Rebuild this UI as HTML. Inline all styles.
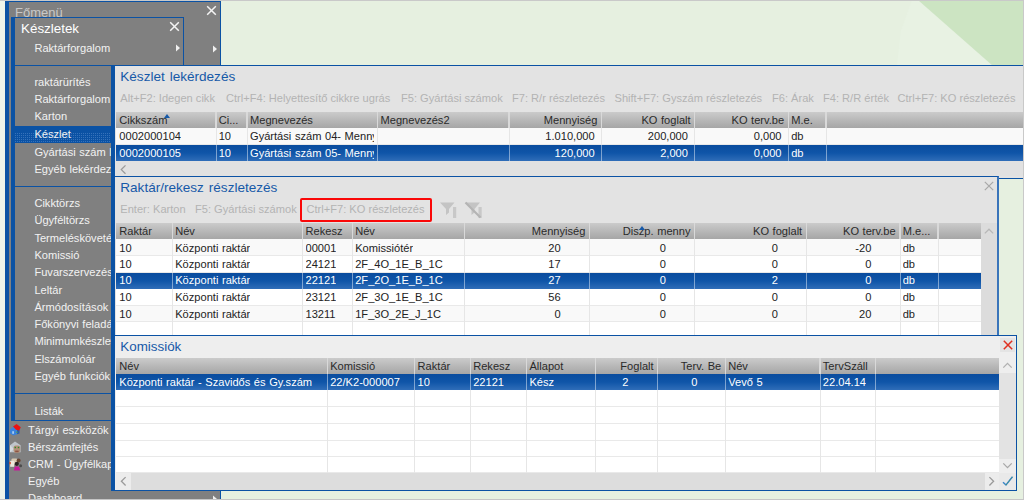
<!DOCTYPE html>
<html lang="hu"><head><meta charset="utf-8"><title>Készlet lekérdezés</title>
<style>
html,body{margin:0;padding:0;}
body{width:1024px;height:500px;overflow:hidden;position:relative;background:#e6f0e0;font-family:"Liberation Sans",Arial,sans-serif;}
#root{position:absolute;left:0;top:0;width:1024px;height:500px;overflow:hidden;}
#root div,.abs{position:absolute;}
.t{position:absolute;white-space:nowrap;line-height:1;word-spacing:.5px;}
</style></head><body><div id="root">
<svg class="abs" style="left:0;top:0" width="1024" height="500" viewBox="0 0 1024 500"><rect width="1024" height="500" fill="#e6f0e0"/><polygon points="912,0 918,0 993,66 897,66 901,31" fill="#e8f2e3"/><polygon points="918,0 1024,0 1024,66 993,66" fill="#cce4c2"/><polygon points="0,0 6,0 6,500 0,500" fill="#eef4ea"/></svg>
<div style="left:5px;top:1px;width:4px;height:499px;background:#0b52a4"></div>
<div style="left:9px;top:1px;width:212px;height:499px;background:#808080;border-top:1px solid #0b52a4;border-right:1px solid #0b52a4;box-sizing:border-box"></div>
<span class="t" style="left:15px;top:6px;font-size:13px;color:#c8c8c8;">Főmenü</span>
<svg class="abs" style="left:206.2px;top:5.2px" width="11" height="11" viewBox="0 0 11 11"><path d="M1.2 1.2 L9.8 9.8 M9.8 1.2 L1.2 9.8" stroke="#f4f4f4" stroke-width="1.5" fill="none"/></svg>
<svg class="abs" style="left:212px;top:45px" width="6" height="8" viewBox="0 0 6 8"><path d="M1 0.5 L5 4 L1 7.5 Z" fill="#f0f0f0"/></svg>
<span class="t" style="left:28px;top:425px;font-size:11.1px;color:#f2f2f2;">Tárgyi eszközök</span>
<span class="t" style="left:28px;top:442px;font-size:11.1px;color:#f2f2f2;">Bérszámfejtés</span>
<span class="t" style="left:28px;top:459px;font-size:11.1px;color:#f2f2f2;">CRM - Ügyfélkapcsolat</span>
<span class="t" style="left:28px;top:476px;font-size:11.1px;color:#f2f2f2;">Egyéb</span>
<span class="t" style="left:28px;top:493px;font-size:11.1px;color:#f2f2f2;">Dashboard</span>
<svg class="abs" style="left:212px;top:495px" width="6" height="8" viewBox="0 0 6 8"><path d="M1 0.5 L5 4 L1 7.5 Z" fill="#f0f0f0"/></svg>
<svg class="abs" style="left:9px;top:423px" width="13" height="13" viewBox="0 0 13 13">
<path d="M1 6.5 L4.5 3.5 L8 6.5 L8 11.3 L4.5 12.4 L1 10.6 Z" fill="#3a82dc"/><path d="M8 7 L10.5 6.5 L10.5 10.4 L8 11.3 Z" fill="#2a5cab"/>
<path d="M4 3.4 L7.6 0.9 L11.8 4.2 L10.2 7.6 L7 6.8 Z" fill="#ea1212"/><rect x="3.2" y="8.2" width="1.8" height="2.6" fill="#a8ccf0"/>
<rect x="7.2" y="8.6" width="1.3" height="1.3" fill="#58a848"/></svg>
<svg class="abs" style="left:9px;top:440px" width="13" height="14" viewBox="0 0 13 14">
<path d="M1 5.2 L6 1.6 L11.6 5.2 L11.6 12.2 L1 12.2 Z" fill="#bfc5cb"/><path d="M1 5.2 L5 9 L1 12.2 Z" fill="#d4d9de"/>
<rect x="4.6" y="5.4" width="6.6" height="7.4" rx="2.2" fill="#b39079"/>
<rect x="5.6" y="6.8" width="1.4" height="1.4" fill="#2f8a2c"/><rect x="8.8" y="6.8" width="1.4" height="1.4" fill="#2f8a2c"/><rect x="6.2" y="10.6" width="3.4" height="1.6" fill="#8c5444"/></svg>
<svg class="abs" style="left:9px;top:457px" width="14" height="14" viewBox="0 0 14 14">
<rect x="2.4" y="1.4" width="6" height="5.6" rx="1.4" fill="#d9c9b2"/><rect x="1.2" y="3.8" width="4" height="6" fill="#ece6dc"/><rect x="0.4" y="5" width="1.3" height="2.2" fill="#d23c1c"/>
<circle cx="9.6" cy="3.6" r="2" fill="#6a4632"/><circle cx="7.8" cy="6.8" r="2.1" fill="#2c2222"/>
<path d="M4.8 13.4 L5.8 9.6 L10 9.6 L11.4 13.4 Z" fill="#c8189a"/><circle cx="11.6" cy="8.8" r="1.5" fill="#4c4c4c"/></svg>
<div style="left:11px;top:17px;width:173px;height:404px;background:#808080;border:1px solid #0b52a4;border-left:4px solid #0b52a4;box-sizing:border-box"></div>
<span class="t" style="left:21px;top:22px;font-size:13.4px;color:#ffffff;">Készletek</span>
<svg class="abs" style="left:169px;top:21px" width="11" height="11" viewBox="0 0 11 11"><path d="M1.2 1.2 L9.8 9.8 M9.8 1.2 L1.2 9.8" stroke="#f4f4f4" stroke-width="1.5" fill="none"/></svg>
<span class="t" style="left:34.4px;top:43px;font-size:11.1px;color:#f2f2f2;">Raktárforgalom</span>
<svg class="abs" style="left:175px;top:44px" width="6" height="8" viewBox="0 0 6 8"><path d="M1 0.5 L5 4 L1 7.5 Z" fill="#f0f0f0"/></svg>
<div style="left:15px;top:65px;width:168px;height:1px;background:#0b52a4"></div>
<div style="left:15px;top:186px;width:168px;height:1px;background:#0b52a4"></div>
<div style="left:15px;top:393px;width:168px;height:1px;background:#0b52a4"></div>
<div style="left:15px;top:126px;width:96px;height:17px;background:#0b52a4"></div>
<svg class="abs" style="left:15px;top:133px" width="96" height="10"><defs><pattern id="dots" width="2" height="2" patternUnits="userSpaceOnUse"><rect width="1" height="1" fill="#5a8ccc"/></pattern></defs><rect width="96" height="10" fill="url(#dots)" opacity=".55"/></svg>
<span class="t" style="left:34.4px;top:77px;font-size:11.1px;color:#f2f2f2;">raktárürítés</span>
<span class="t" style="left:34.4px;top:94px;font-size:11.1px;color:#f2f2f2;">Raktárforgalom</span>
<span class="t" style="left:34.4px;top:111px;font-size:11.1px;color:#f2f2f2;">Karton</span>
<span class="t" style="left:34.4px;top:129px;font-size:11.1px;color:#f2f2f2;">Készlet</span>
<span class="t" style="left:34.4px;top:147px;font-size:11.1px;color:#f2f2f2;">Gyártási szám lekérdezés</span>
<span class="t" style="left:34.4px;top:164px;font-size:11.1px;color:#f2f2f2;">Egyéb lekérdezések</span>
<span class="t" style="left:34.4px;top:198px;font-size:11.1px;color:#f2f2f2;">Cikktörzs</span>
<span class="t" style="left:34.4px;top:215px;font-size:11.1px;color:#f2f2f2;">Ügyféltörzs</span>
<span class="t" style="left:34.4px;top:233px;font-size:11.1px;color:#f2f2f2;">Termeléskövetés</span>
<span class="t" style="left:34.4px;top:250px;font-size:11.1px;color:#f2f2f2;">Komissió</span>
<span class="t" style="left:34.4px;top:267px;font-size:11.1px;color:#f2f2f2;">Fuvarszervezés</span>
<span class="t" style="left:34.4px;top:285px;font-size:11.1px;color:#f2f2f2;">Leltár</span>
<span class="t" style="left:34.4px;top:302px;font-size:11.1px;color:#f2f2f2;">Ármódosítások</span>
<span class="t" style="left:34.4px;top:319px;font-size:11.1px;color:#f2f2f2;">Főkönyvi feladás</span>
<span class="t" style="left:34.4px;top:336px;font-size:11.1px;color:#f2f2f2;">Minimumkészlet</span>
<span class="t" style="left:34.4px;top:354px;font-size:11.1px;color:#f2f2f2;">Elszámolóár</span>
<span class="t" style="left:34.4px;top:371px;font-size:11.1px;color:#f2f2f2;">Egyéb funkciók</span>
<span class="t" style="left:34.4px;top:406px;font-size:11.1px;color:#f2f2f2;">Listák</span>
<div style="left:111px;top:65px;width:913px;height:114px;background:#e3e3e3;border-top:1px solid #0b52a4;border-bottom:1px solid #0b52a4;border-left:4px solid #0b52a4;box-sizing:border-box"></div>
<span class="t" style="left:120.3px;top:70px;font-size:13.55px;color:#1659a8;word-spacing:1.2px;">Készlet lekérdezés</span>
<span class="t" style="left:120.3px;top:93px;font-size:11.1px;color:#b3b3b3;word-spacing:0;">Alt+F2: Idegen cikk</span>
<span class="t" style="left:226px;top:93px;font-size:11.1px;color:#b3b3b3;word-spacing:0;">Ctrl+F4: Helyettesítő cikkre ugrás</span>
<span class="t" style="left:401px;top:93px;font-size:11.1px;color:#b3b3b3;word-spacing:0;">F5: Gyártási számok</span>
<span class="t" style="left:512px;top:93px;font-size:11.1px;color:#b3b3b3;word-spacing:0;">F7: R/r részletezés</span>
<span class="t" style="left:614.5px;top:93px;font-size:11.1px;color:#b3b3b3;word-spacing:0;">Shift+F7: Gyszám részletezés</span>
<span class="t" style="left:772px;top:93px;font-size:11.1px;color:#b3b3b3;word-spacing:0;">F6: Árak</span>
<span class="t" style="left:823px;top:93px;font-size:11.1px;color:#b3b3b3;word-spacing:0;">F4: R/R érték</span>
<span class="t" style="left:897.5px;top:93px;font-size:11.1px;color:#b3b3b3;word-spacing:0;">Ctrl+F7: KO részletezés</span>
<div style="left:116px;top:112px;width:908px;height:16px;background:linear-gradient(#cbcbcb,#b6b6b6 55%,#a6a6a6)"></div>
<div style="left:215.0px;top:112px;width:1.5px;height:16px;background:#d9d9d9"></div>
<span class="t" style="left:119.3px;top:115px;font-size:11.1px;color:#2a2a2a;">Cikkszám</span>
<div style="left:246.3px;top:112px;width:1.5px;height:16px;background:#d9d9d9"></div>
<span class="t" style="left:218.7px;top:115px;font-size:11.1px;color:#2a2a2a;">Ci...</span>
<div style="left:376.8px;top:112px;width:1.5px;height:16px;background:#d9d9d9"></div>
<span class="t" style="left:250.0px;top:115px;font-size:11.1px;color:#2a2a2a;">Megnevezés</span>
<div style="left:508.3px;top:112px;width:1.5px;height:16px;background:#d9d9d9"></div>
<span class="t" style="left:380.5px;top:115px;font-size:11.1px;color:#2a2a2a;">Megnevezés2</span>
<div style="left:600.7px;top:112px;width:1.5px;height:16px;background:#d9d9d9"></div>
<span class="t" style="right:426.5999999999999px;top:115px;font-size:11.1px;color:#2a2a2a;">Mennyiség</span>
<div style="left:693.9px;top:112px;width:1.5px;height:16px;background:#d9d9d9"></div>
<span class="t" style="right:333.4px;top:115px;font-size:11.1px;color:#2a2a2a;">KO foglalt</span>
<div style="left:787.5px;top:112px;width:1.5px;height:16px;background:#d9d9d9"></div>
<span class="t" style="right:239.79999999999995px;top:115px;font-size:11.1px;color:#2a2a2a;">KO terv.be</span>
<div style="left:825.0px;top:112px;width:1.5px;height:16px;background:#d9d9d9"></div>
<span class="t" style="left:791.2px;top:115px;font-size:11.1px;color:#2a2a2a;">M.e.</span>
<div style="left:116px;top:128px;width:908px;height:17px;background:#f9f9f9;border-bottom:1px solid #e9e9e9;box-sizing:border-box"></div>
<div style="left:215.5px;top:128px;width:1px;height:17px;background:#e6e6e6"></div>
<div style="left:246.8px;top:128px;width:1px;height:17px;background:#e6e6e6"></div>
<div style="left:377.3px;top:128px;width:1px;height:17px;background:#e6e6e6"></div>
<div style="left:508.8px;top:128px;width:1px;height:17px;background:#e6e6e6"></div>
<div style="left:601.2px;top:128px;width:1px;height:17px;background:#e6e6e6"></div>
<div style="left:694.4px;top:128px;width:1px;height:17px;background:#e6e6e6"></div>
<div style="left:788px;top:128px;width:1px;height:17px;background:#e6e6e6"></div>
<div style="left:825.5px;top:128px;width:1px;height:17px;background:#e6e6e6"></div>
<span class="t" style="left:119.3px;top:131px;font-size:11.1px;color:#222222;max-width:92.6px;overflow:hidden;padding-top:3px;margin-top:-3px;">0002000104</span>
<span class="t" style="left:218.7px;top:131px;font-size:11.1px;color:#222222;max-width:24.5px;overflow:hidden;padding-top:3px;margin-top:-3px;">10</span>
<span class="t" style="left:250.0px;top:131px;font-size:11.1px;color:#222222;max-width:123.7px;overflow:hidden;padding-top:3px;margin-top:-3px;">Gyártási szám 04- Menny</span>
<span class="t" style="right:429.29999999999995px;top:131px;font-size:11.1px;color:#222222;">1.010,000</span>
<span class="t" style="right:336.1px;top:131px;font-size:11.1px;color:#222222;">200,000</span>
<span class="t" style="right:242.5px;top:131px;font-size:11.1px;color:#222222;">0,000</span>
<span class="t" style="left:791.2px;top:131px;font-size:11.1px;color:#222222;max-width:30.7px;overflow:hidden;padding-top:3px;margin-top:-3px;">db</span>
<div style="left:116px;top:145px;width:908px;height:16px;background:linear-gradient(#0a4c9e,#0f55a8 50%,#2f6db8)"></div>
<div style="left:215.5px;top:145px;width:1px;height:16px;background:rgba(255,255,255,.45)"></div>
<div style="left:246.8px;top:145px;width:1px;height:16px;background:rgba(255,255,255,.45)"></div>
<div style="left:377.3px;top:145px;width:1px;height:16px;background:rgba(255,255,255,.45)"></div>
<div style="left:508.8px;top:145px;width:1px;height:16px;background:rgba(255,255,255,.45)"></div>
<div style="left:601.2px;top:145px;width:1px;height:16px;background:rgba(255,255,255,.45)"></div>
<div style="left:694.4px;top:145px;width:1px;height:16px;background:rgba(255,255,255,.45)"></div>
<div style="left:788px;top:145px;width:1px;height:16px;background:rgba(255,255,255,.45)"></div>
<div style="left:825.5px;top:145px;width:1px;height:16px;background:rgba(255,255,255,.45)"></div>
<span class="t" style="left:119.3px;top:148px;font-size:11.1px;color:#ffffff;max-width:92.6px;overflow:hidden;padding-top:3px;margin-top:-3px;">0002000105</span>
<span class="t" style="left:218.7px;top:148px;font-size:11.1px;color:#ffffff;max-width:24.5px;overflow:hidden;padding-top:3px;margin-top:-3px;">10</span>
<span class="t" style="left:250.0px;top:148px;font-size:11.1px;color:#ffffff;max-width:123.7px;overflow:hidden;padding-top:3px;margin-top:-3px;">Gyártási szám 05- Menny</span>
<span class="t" style="right:429.29999999999995px;top:148px;font-size:11.1px;color:#ffffff;">120,000</span>
<span class="t" style="right:336.1px;top:148px;font-size:11.1px;color:#ffffff;">2,000</span>
<span class="t" style="right:242.5px;top:148px;font-size:11.1px;color:#ffffff;">0,000</span>
<span class="t" style="left:791.2px;top:148px;font-size:11.1px;color:#ffffff;max-width:30.7px;overflow:hidden;padding-top:3px;margin-top:-3px;">db</span>
<svg class="abs" style="left:163.5px;top:114px" width="6" height="4" viewBox="0 0 6 4"><path d="M0 4 L3 0 L6 4 Z" fill="#1659a8"/></svg>
<div style="left:116px;top:161px;width:908px;height:15px;background:#e1e1e1"></div>
<svg class="abs" style="left:0;top:0" width="1024" height="500"><path d="M125.5 165.4 L121.30000000000001 169.6 L125.5 173.79999999999998" stroke="#9a9a9a" stroke-width="1.3" fill="none"/></svg>
<div style="left:111px;top:176px;width:888px;height:162px;background:#e3e3e3;border-top:1px solid #0b52a4;border-right:2px solid #3a74ba;border-left:4px solid #0b52a4;box-sizing:border-box"></div>
<span class="t" style="left:120.3px;top:181px;font-size:13.55px;color:#1659a8;word-spacing:1.2px;">Raktár/rekesz részletezés</span>
<svg class="abs" style="left:984px;top:181px" width="10" height="10" viewBox="0 0 10 10"><path d="M0.8 0.8 L9.2 9.2 M9.2 0.8 L0.8 9.2" stroke="#a8a8a8" stroke-width="1.2" fill="none"/></svg>
<span class="t" style="left:120.3px;top:204px;font-size:11.1px;color:#b3b3b3;word-spacing:0;">Enter: Karton</span>
<span class="t" style="left:195px;top:204px;font-size:11.1px;color:#b3b3b3;word-spacing:0;">F5: Gyártási számok</span>
<span class="t" style="left:306.5px;top:204px;font-size:11.1px;color:#b3b3b3;word-spacing:0;">Ctrl+F7: KO részletezés</span>
<div style="left:300px;top:198px;width:132px;height:24px;border:2.3px solid #fa0808;border-radius:2px;box-sizing:border-box"></div>
<svg class="abs" style="left:439px;top:201px" width="46" height="18" viewBox="0 0 46 18">
<path d="M1 1.5 L15.5 1.5 L10 8 L10 11.5 L7 14 L7 8 Z" fill="#c4c4c4"/><rect x="14" y="6" width="3.2" height="11" fill="#c8c8c8"/>
<path d="M26.5 1.5 L41 1.5 L35.5 8 L35.5 11.5 L32.5 14 L32.5 8 Z" fill="#c4c4c4"/><rect x="39.5" y="6" width="3.2" height="11" fill="#c8c8c8"/>
<path d="M26.5 1.5 L41.5 16.5" stroke="#b4b4b4" stroke-width="2.2"/></svg>
<div style="left:116px;top:223px;width:865px;height:16px;background:linear-gradient(#cbcbcb,#b6b6b6 55%,#a6a6a6)"></div>
<div style="left:171.5px;top:223px;width:1.5px;height:16px;background:#d9d9d9"></div>
<span class="t" style="left:119.3px;top:226px;font-size:11.1px;color:#2a2a2a;">Raktár</span>
<div style="left:301.8px;top:223px;width:1.5px;height:16px;background:#d9d9d9"></div>
<span class="t" style="left:175.2px;top:226px;font-size:11.1px;color:#2a2a2a;">Név</span>
<div style="left:351.5px;top:223px;width:1.5px;height:16px;background:#d9d9d9"></div>
<span class="t" style="left:305.5px;top:226px;font-size:11.1px;color:#2a2a2a;">Rekesz</span>
<div style="left:463.7px;top:223px;width:1.5px;height:16px;background:#d9d9d9"></div>
<span class="t" style="left:355.2px;top:226px;font-size:11.1px;color:#2a2a2a;">Név</span>
<div style="left:588.7px;top:223px;width:1.5px;height:16px;background:#d9d9d9"></div>
<span class="t" style="right:438.5999999999999px;top:226px;font-size:11.1px;color:#2a2a2a;">Mennyiség</span>
<div style="left:693.8px;top:223px;width:1.5px;height:16px;background:#d9d9d9"></div>
<span class="t" style="right:333.5px;top:226px;font-size:11.1px;color:#2a2a2a;">Diszp. menny</span>
<div style="left:805.5px;top:223px;width:1.5px;height:16px;background:#d9d9d9"></div>
<span class="t" style="right:221.79999999999995px;top:226px;font-size:11.1px;color:#2a2a2a;">KO foglalt</span>
<div style="left:899.0px;top:223px;width:1.5px;height:16px;background:#d9d9d9"></div>
<span class="t" style="right:128.29999999999995px;top:226px;font-size:11.1px;color:#2a2a2a;">KO terv.be</span>
<div style="left:937.0px;top:223px;width:1.5px;height:16px;background:#d9d9d9"></div>
<span class="t" style="left:902.7px;top:226px;font-size:11.1px;color:#2a2a2a;">M.e...</span>
<div style="left:116px;top:239px;width:865px;height:17px;background:#f9f9f9;border-bottom:1px solid #e9e9e9;box-sizing:border-box"></div>
<div style="left:172px;top:239px;width:1px;height:17px;background:#e6e6e6"></div>
<div style="left:302.3px;top:239px;width:1px;height:17px;background:#e6e6e6"></div>
<div style="left:352px;top:239px;width:1px;height:17px;background:#e6e6e6"></div>
<div style="left:464.2px;top:239px;width:1px;height:17px;background:#e6e6e6"></div>
<div style="left:589.2px;top:239px;width:1px;height:17px;background:#e6e6e6"></div>
<div style="left:694.3px;top:239px;width:1px;height:17px;background:#e6e6e6"></div>
<div style="left:806px;top:239px;width:1px;height:17px;background:#e6e6e6"></div>
<div style="left:899.5px;top:239px;width:1px;height:17px;background:#e6e6e6"></div>
<div style="left:937.5px;top:239px;width:1px;height:17px;background:#e6e6e6"></div>
<span class="t" style="left:119.3px;top:243px;font-size:11.1px;color:#222222;max-width:49.1px;overflow:hidden;padding-top:3px;margin-top:-3px;">10</span>
<span class="t" style="left:175.2px;top:243px;font-size:11.1px;color:#222222;max-width:123.5px;overflow:hidden;padding-top:3px;margin-top:-3px;">Központi raktár</span>
<span class="t" style="left:305.5px;top:243px;font-size:11.1px;color:#222222;max-width:42.9px;overflow:hidden;padding-top:3px;margin-top:-3px;">00001</span>
<span class="t" style="left:355.2px;top:243px;font-size:11.1px;color:#222222;max-width:105.4px;overflow:hidden;padding-top:3px;margin-top:-3px;">Komissiótér</span>
<span class="t" style="right:463.29999999999995px;top:243px;font-size:11.1px;color:#222222;">20</span>
<span class="t" style="right:358.0px;top:243px;font-size:11.1px;color:#222222;">0</span>
<span class="t" style="right:246px;top:243px;font-size:11.1px;color:#222222;">0</span>
<span class="t" style="right:152.70000000000005px;top:243px;font-size:11.1px;color:#222222;">-20</span>
<span class="t" style="left:902.7px;top:243px;font-size:11.1px;color:#222222;max-width:31.2px;overflow:hidden;padding-top:3px;margin-top:-3px;">db</span>
<div style="left:116px;top:256px;width:865px;height:17px;background:#ffffff;border-bottom:1px solid #e9e9e9;box-sizing:border-box"></div>
<div style="left:172px;top:256px;width:1px;height:17px;background:#e6e6e6"></div>
<div style="left:302.3px;top:256px;width:1px;height:17px;background:#e6e6e6"></div>
<div style="left:352px;top:256px;width:1px;height:17px;background:#e6e6e6"></div>
<div style="left:464.2px;top:256px;width:1px;height:17px;background:#e6e6e6"></div>
<div style="left:589.2px;top:256px;width:1px;height:17px;background:#e6e6e6"></div>
<div style="left:694.3px;top:256px;width:1px;height:17px;background:#e6e6e6"></div>
<div style="left:806px;top:256px;width:1px;height:17px;background:#e6e6e6"></div>
<div style="left:899.5px;top:256px;width:1px;height:17px;background:#e6e6e6"></div>
<div style="left:937.5px;top:256px;width:1px;height:17px;background:#e6e6e6"></div>
<span class="t" style="left:119.3px;top:259px;font-size:11.1px;color:#222222;max-width:49.1px;overflow:hidden;padding-top:3px;margin-top:-3px;">10</span>
<span class="t" style="left:175.2px;top:259px;font-size:11.1px;color:#222222;max-width:123.5px;overflow:hidden;padding-top:3px;margin-top:-3px;">Központi raktár</span>
<span class="t" style="left:305.5px;top:259px;font-size:11.1px;color:#222222;max-width:42.9px;overflow:hidden;padding-top:3px;margin-top:-3px;">24121</span>
<span class="t" style="left:355.2px;top:259px;font-size:11.1px;color:#222222;max-width:105.4px;overflow:hidden;padding-top:3px;margin-top:-3px;">2F_4O_1E_B_1C</span>
<span class="t" style="right:463.29999999999995px;top:259px;font-size:11.1px;color:#222222;">17</span>
<span class="t" style="right:358.0px;top:259px;font-size:11.1px;color:#222222;">0</span>
<span class="t" style="right:246px;top:259px;font-size:11.1px;color:#222222;">0</span>
<span class="t" style="right:152.70000000000005px;top:259px;font-size:11.1px;color:#222222;">0</span>
<span class="t" style="left:902.7px;top:259px;font-size:11.1px;color:#222222;max-width:31.2px;overflow:hidden;padding-top:3px;margin-top:-3px;">db</span>
<div style="left:116px;top:273px;width:865px;height:16px;background:linear-gradient(#0a4c9e,#0f55a8 50%,#2f6db8)"></div>
<div style="left:172px;top:273px;width:1px;height:16px;background:rgba(255,255,255,.45)"></div>
<div style="left:302.3px;top:273px;width:1px;height:16px;background:rgba(255,255,255,.45)"></div>
<div style="left:352px;top:273px;width:1px;height:16px;background:rgba(255,255,255,.45)"></div>
<div style="left:464.2px;top:273px;width:1px;height:16px;background:rgba(255,255,255,.45)"></div>
<div style="left:589.2px;top:273px;width:1px;height:16px;background:rgba(255,255,255,.45)"></div>
<div style="left:694.3px;top:273px;width:1px;height:16px;background:rgba(255,255,255,.45)"></div>
<div style="left:806px;top:273px;width:1px;height:16px;background:rgba(255,255,255,.45)"></div>
<div style="left:899.5px;top:273px;width:1px;height:16px;background:rgba(255,255,255,.45)"></div>
<div style="left:937.5px;top:273px;width:1px;height:16px;background:rgba(255,255,255,.45)"></div>
<span class="t" style="left:119.3px;top:275px;font-size:11.1px;color:#ffffff;max-width:49.1px;overflow:hidden;padding-top:3px;margin-top:-3px;">10</span>
<span class="t" style="left:175.2px;top:275px;font-size:11.1px;color:#ffffff;max-width:123.5px;overflow:hidden;padding-top:3px;margin-top:-3px;">Központi raktár</span>
<span class="t" style="left:305.5px;top:275px;font-size:11.1px;color:#ffffff;max-width:42.9px;overflow:hidden;padding-top:3px;margin-top:-3px;">22121</span>
<span class="t" style="left:355.2px;top:275px;font-size:11.1px;color:#ffffff;max-width:105.4px;overflow:hidden;padding-top:3px;margin-top:-3px;">2F_2O_1E_B_1C</span>
<span class="t" style="right:463.29999999999995px;top:275px;font-size:11.1px;color:#ffffff;">27</span>
<span class="t" style="right:358.0px;top:275px;font-size:11.1px;color:#ffffff;">0</span>
<span class="t" style="right:246px;top:275px;font-size:11.1px;color:#ffffff;">2</span>
<span class="t" style="right:152.70000000000005px;top:275px;font-size:11.1px;color:#ffffff;">0</span>
<span class="t" style="left:902.7px;top:275px;font-size:11.1px;color:#ffffff;max-width:31.2px;overflow:hidden;padding-top:3px;margin-top:-3px;">db</span>
<div style="left:116px;top:289px;width:865px;height:17px;background:#ffffff;border-bottom:1px solid #e9e9e9;box-sizing:border-box"></div>
<div style="left:172px;top:289px;width:1px;height:17px;background:#e6e6e6"></div>
<div style="left:302.3px;top:289px;width:1px;height:17px;background:#e6e6e6"></div>
<div style="left:352px;top:289px;width:1px;height:17px;background:#e6e6e6"></div>
<div style="left:464.2px;top:289px;width:1px;height:17px;background:#e6e6e6"></div>
<div style="left:589.2px;top:289px;width:1px;height:17px;background:#e6e6e6"></div>
<div style="left:694.3px;top:289px;width:1px;height:17px;background:#e6e6e6"></div>
<div style="left:806px;top:289px;width:1px;height:17px;background:#e6e6e6"></div>
<div style="left:899.5px;top:289px;width:1px;height:17px;background:#e6e6e6"></div>
<div style="left:937.5px;top:289px;width:1px;height:17px;background:#e6e6e6"></div>
<span class="t" style="left:119.3px;top:292px;font-size:11.1px;color:#222222;max-width:49.1px;overflow:hidden;padding-top:3px;margin-top:-3px;">10</span>
<span class="t" style="left:175.2px;top:292px;font-size:11.1px;color:#222222;max-width:123.5px;overflow:hidden;padding-top:3px;margin-top:-3px;">Központi raktár</span>
<span class="t" style="left:305.5px;top:292px;font-size:11.1px;color:#222222;max-width:42.9px;overflow:hidden;padding-top:3px;margin-top:-3px;">23121</span>
<span class="t" style="left:355.2px;top:292px;font-size:11.1px;color:#222222;max-width:105.4px;overflow:hidden;padding-top:3px;margin-top:-3px;">2F_3O_1E_B_1C</span>
<span class="t" style="right:463.29999999999995px;top:292px;font-size:11.1px;color:#222222;">56</span>
<span class="t" style="right:358.0px;top:292px;font-size:11.1px;color:#222222;">0</span>
<span class="t" style="right:246px;top:292px;font-size:11.1px;color:#222222;">0</span>
<span class="t" style="right:152.70000000000005px;top:292px;font-size:11.1px;color:#222222;">0</span>
<span class="t" style="left:902.7px;top:292px;font-size:11.1px;color:#222222;max-width:31.2px;overflow:hidden;padding-top:3px;margin-top:-3px;">db</span>
<div style="left:116px;top:306px;width:865px;height:16px;background:#f9f9f9;border-bottom:1px solid #e9e9e9;box-sizing:border-box"></div>
<div style="left:172px;top:306px;width:1px;height:16px;background:#e6e6e6"></div>
<div style="left:302.3px;top:306px;width:1px;height:16px;background:#e6e6e6"></div>
<div style="left:352px;top:306px;width:1px;height:16px;background:#e6e6e6"></div>
<div style="left:464.2px;top:306px;width:1px;height:16px;background:#e6e6e6"></div>
<div style="left:589.2px;top:306px;width:1px;height:16px;background:#e6e6e6"></div>
<div style="left:694.3px;top:306px;width:1px;height:16px;background:#e6e6e6"></div>
<div style="left:806px;top:306px;width:1px;height:16px;background:#e6e6e6"></div>
<div style="left:899.5px;top:306px;width:1px;height:16px;background:#e6e6e6"></div>
<div style="left:937.5px;top:306px;width:1px;height:16px;background:#e6e6e6"></div>
<span class="t" style="left:119.3px;top:309px;font-size:11.1px;color:#222222;max-width:49.1px;overflow:hidden;padding-top:3px;margin-top:-3px;">10</span>
<span class="t" style="left:175.2px;top:309px;font-size:11.1px;color:#222222;max-width:123.5px;overflow:hidden;padding-top:3px;margin-top:-3px;">Központi raktár</span>
<span class="t" style="left:305.5px;top:309px;font-size:11.1px;color:#222222;max-width:42.9px;overflow:hidden;padding-top:3px;margin-top:-3px;">13211</span>
<span class="t" style="left:355.2px;top:309px;font-size:11.1px;color:#222222;max-width:105.4px;overflow:hidden;padding-top:3px;margin-top:-3px;">1F_3O_2E_J_1C</span>
<span class="t" style="right:463.29999999999995px;top:309px;font-size:11.1px;color:#222222;">0</span>
<span class="t" style="right:358.0px;top:309px;font-size:11.1px;color:#222222;">0</span>
<span class="t" style="right:246px;top:309px;font-size:11.1px;color:#222222;">0</span>
<span class="t" style="right:152.70000000000005px;top:309px;font-size:11.1px;color:#222222;">20</span>
<span class="t" style="left:902.7px;top:309px;font-size:11.1px;color:#222222;max-width:31.2px;overflow:hidden;padding-top:3px;margin-top:-3px;">db</span>
<div style="left:116px;top:322px;width:865px;height:14px;background:#ffffff;border-bottom:1px solid #e9e9e9;box-sizing:border-box"></div>
<div style="left:172px;top:322px;width:1px;height:14px;background:#e6e6e6"></div>
<div style="left:302.3px;top:322px;width:1px;height:14px;background:#e6e6e6"></div>
<div style="left:352px;top:322px;width:1px;height:14px;background:#e6e6e6"></div>
<div style="left:464.2px;top:322px;width:1px;height:14px;background:#e6e6e6"></div>
<div style="left:589.2px;top:322px;width:1px;height:14px;background:#e6e6e6"></div>
<div style="left:694.3px;top:322px;width:1px;height:14px;background:#e6e6e6"></div>
<div style="left:806px;top:322px;width:1px;height:14px;background:#e6e6e6"></div>
<div style="left:899.5px;top:322px;width:1px;height:14px;background:#e6e6e6"></div>
<div style="left:937.5px;top:322px;width:1px;height:14px;background:#e6e6e6"></div>
<div style="left:981px;top:223.3px;width:16px;height:113px;background:#dcdcdc"></div>
<svg class="abs" style="left:0;top:0" width="1024" height="500"><path d="M984.8 233.4 L989 229.20000000000002 L993.2 233.4" stroke="#b8b8b8" stroke-width="1.3" fill="none"/></svg>
<svg class="abs" style="left:638.5px;top:225.5px" width="6" height="4" viewBox="0 0 6 4"><path d="M0 4 L3 0 L6 4 Z" fill="#1659a8"/></svg>
<div style="left:111px;top:335px;width:906px;height:156px;background:#eeeeee;border-top:1px solid #0b52a4;border-bottom:1px solid #0b52a4;border-right:1px solid #0b52a4;border-left:4px solid #0b52a4;box-sizing:border-box"></div>
<span class="t" style="left:120.3px;top:340px;font-size:13.4px;color:#1659a8;">Komissiók</span>
<div style="left:1000px;top:338px;width:15px;height:14px;background:#e4e4e4"></div>
<svg class="abs" style="left:1002.5px;top:339.8px" width="10" height="10" viewBox="0 0 10 10"><path d="M0.8 0.8 L9.2 9.2 M9.2 0.8 L0.8 9.2" stroke="#e03020" stroke-width="1.5" fill="none"/></svg>
<div style="left:116px;top:358px;width:883px;height:16px;background:linear-gradient(#cbcbcb,#b6b6b6 55%,#a6a6a6)"></div>
<div style="left:326.5px;top:358px;width:1.5px;height:16px;background:#d9d9d9"></div>
<span class="t" style="left:119.3px;top:361px;font-size:11.1px;color:#2a2a2a;">Név</span>
<div style="left:413.9px;top:358px;width:1.5px;height:16px;background:#d9d9d9"></div>
<span class="t" style="left:330.2px;top:361px;font-size:11.1px;color:#2a2a2a;">Komissió</span>
<div style="left:469.5px;top:358px;width:1.5px;height:16px;background:#d9d9d9"></div>
<span class="t" style="left:417.59999999999997px;top:361px;font-size:11.1px;color:#2a2a2a;">Raktár</span>
<div style="left:525.7px;top:358px;width:1.5px;height:16px;background:#d9d9d9"></div>
<span class="t" style="left:473.2px;top:361px;font-size:11.1px;color:#2a2a2a;">Rekesz</span>
<div style="left:594.5px;top:358px;width:1.5px;height:16px;background:#d9d9d9"></div>
<span class="t" style="left:529.4000000000001px;top:361px;font-size:11.1px;color:#2a2a2a;">Állapot</span>
<div style="left:656.9px;top:358px;width:1.5px;height:16px;background:#d9d9d9"></div>
<span class="t" style="right:370.4px;top:361px;font-size:11.1px;color:#2a2a2a;">Foglalt</span>
<div style="left:724.5px;top:358px;width:1.5px;height:16px;background:#d9d9d9"></div>
<span class="t" style="right:302.79999999999995px;top:361px;font-size:11.1px;color:#2a2a2a;">Terv. Be</span>
<div style="left:819.1px;top:358px;width:1.5px;height:16px;background:#d9d9d9"></div>
<span class="t" style="left:728.2px;top:361px;font-size:11.1px;color:#2a2a2a;">Név</span>
<div style="left:874.9px;top:358px;width:1.5px;height:16px;background:#d9d9d9"></div>
<span class="t" style="left:822.8000000000001px;top:361px;font-size:11.1px;color:#2a2a2a;">TervSzáll</span>
<div style="left:116px;top:374px;width:883px;height:16px;background:linear-gradient(#0a4c9e,#0f55a8 50%,#2f6db8)"></div>
<div style="left:327px;top:374px;width:1px;height:16px;background:rgba(255,255,255,.45)"></div>
<div style="left:414.4px;top:374px;width:1px;height:16px;background:rgba(255,255,255,.45)"></div>
<div style="left:470px;top:374px;width:1px;height:16px;background:rgba(255,255,255,.45)"></div>
<div style="left:526.2px;top:374px;width:1px;height:16px;background:rgba(255,255,255,.45)"></div>
<div style="left:595px;top:374px;width:1px;height:16px;background:rgba(255,255,255,.45)"></div>
<div style="left:657.4px;top:374px;width:1px;height:16px;background:rgba(255,255,255,.45)"></div>
<div style="left:725px;top:374px;width:1px;height:16px;background:rgba(255,255,255,.45)"></div>
<div style="left:819.6px;top:374px;width:1px;height:16px;background:rgba(255,255,255,.45)"></div>
<div style="left:875.4px;top:374px;width:1px;height:16px;background:rgba(255,255,255,.45)"></div>
<span class="t" style="left:119.3px;top:377px;font-size:11.1px;color:#ffffff;max-width:204.1px;overflow:hidden;padding-top:3px;margin-top:-3px;">Központi raktár - Szavidős és Gy.szám</span>
<span class="t" style="left:330.2px;top:377px;font-size:11.1px;color:#ffffff;max-width:80.6px;overflow:hidden;padding-top:3px;margin-top:-3px;">22/K2-000007</span>
<span class="t" style="left:417.59999999999997px;top:377px;font-size:11.1px;color:#ffffff;max-width:48.8px;overflow:hidden;padding-top:3px;margin-top:-3px;">10</span>
<span class="t" style="left:473.2px;top:377px;font-size:11.1px;color:#ffffff;max-width:49.4px;overflow:hidden;padding-top:3px;margin-top:-3px;">22121</span>
<span class="t" style="left:529.4000000000001px;top:377px;font-size:11.1px;color:#ffffff;max-width:62.0px;overflow:hidden;padding-top:3px;margin-top:-3px;">Kész</span>
<span class="t" style="right:395.6px;top:377px;font-size:11.1px;color:#ffffff;">2</span>
<span class="t" style="right:326.5px;top:377px;font-size:11.1px;color:#ffffff;">0</span>
<span class="t" style="left:728.2px;top:377px;font-size:11.1px;color:#ffffff;max-width:87.8px;overflow:hidden;padding-top:3px;margin-top:-3px;">Vevő 5</span>
<span class="t" style="left:822.8000000000001px;top:377px;font-size:11.1px;color:#ffffff;max-width:49.0px;overflow:hidden;padding-top:3px;margin-top:-3px;">22.04.14</span>
<div style="left:116px;top:390px;width:883px;height:17px;background:#ffffff;border-bottom:1px solid #e9e9e9;box-sizing:border-box"></div>
<div style="left:327px;top:390px;width:1px;height:17px;background:#e6e6e6"></div>
<div style="left:414.4px;top:390px;width:1px;height:17px;background:#e6e6e6"></div>
<div style="left:470px;top:390px;width:1px;height:17px;background:#e6e6e6"></div>
<div style="left:526.2px;top:390px;width:1px;height:17px;background:#e6e6e6"></div>
<div style="left:595px;top:390px;width:1px;height:17px;background:#e6e6e6"></div>
<div style="left:657.4px;top:390px;width:1px;height:17px;background:#e6e6e6"></div>
<div style="left:725px;top:390px;width:1px;height:17px;background:#e6e6e6"></div>
<div style="left:819.6px;top:390px;width:1px;height:17px;background:#e6e6e6"></div>
<div style="left:875.4px;top:390px;width:1px;height:17px;background:#e6e6e6"></div>
<div style="left:116px;top:407px;width:883px;height:17px;background:#ffffff;border-bottom:1px solid #e9e9e9;box-sizing:border-box"></div>
<div style="left:327px;top:407px;width:1px;height:17px;background:#e6e6e6"></div>
<div style="left:414.4px;top:407px;width:1px;height:17px;background:#e6e6e6"></div>
<div style="left:470px;top:407px;width:1px;height:17px;background:#e6e6e6"></div>
<div style="left:526.2px;top:407px;width:1px;height:17px;background:#e6e6e6"></div>
<div style="left:595px;top:407px;width:1px;height:17px;background:#e6e6e6"></div>
<div style="left:657.4px;top:407px;width:1px;height:17px;background:#e6e6e6"></div>
<div style="left:725px;top:407px;width:1px;height:17px;background:#e6e6e6"></div>
<div style="left:819.6px;top:407px;width:1px;height:17px;background:#e6e6e6"></div>
<div style="left:875.4px;top:407px;width:1px;height:17px;background:#e6e6e6"></div>
<div style="left:116px;top:424px;width:883px;height:17px;background:#ffffff;border-bottom:1px solid #e9e9e9;box-sizing:border-box"></div>
<div style="left:327px;top:424px;width:1px;height:17px;background:#e6e6e6"></div>
<div style="left:414.4px;top:424px;width:1px;height:17px;background:#e6e6e6"></div>
<div style="left:470px;top:424px;width:1px;height:17px;background:#e6e6e6"></div>
<div style="left:526.2px;top:424px;width:1px;height:17px;background:#e6e6e6"></div>
<div style="left:595px;top:424px;width:1px;height:17px;background:#e6e6e6"></div>
<div style="left:657.4px;top:424px;width:1px;height:17px;background:#e6e6e6"></div>
<div style="left:725px;top:424px;width:1px;height:17px;background:#e6e6e6"></div>
<div style="left:819.6px;top:424px;width:1px;height:17px;background:#e6e6e6"></div>
<div style="left:875.4px;top:424px;width:1px;height:17px;background:#e6e6e6"></div>
<div style="left:116px;top:441px;width:883px;height:16px;background:#ffffff;border-bottom:1px solid #e9e9e9;box-sizing:border-box"></div>
<div style="left:327px;top:441px;width:1px;height:16px;background:#e6e6e6"></div>
<div style="left:414.4px;top:441px;width:1px;height:16px;background:#e6e6e6"></div>
<div style="left:470px;top:441px;width:1px;height:16px;background:#e6e6e6"></div>
<div style="left:526.2px;top:441px;width:1px;height:16px;background:#e6e6e6"></div>
<div style="left:595px;top:441px;width:1px;height:16px;background:#e6e6e6"></div>
<div style="left:657.4px;top:441px;width:1px;height:16px;background:#e6e6e6"></div>
<div style="left:725px;top:441px;width:1px;height:16px;background:#e6e6e6"></div>
<div style="left:819.6px;top:441px;width:1px;height:16px;background:#e6e6e6"></div>
<div style="left:875.4px;top:441px;width:1px;height:16px;background:#e6e6e6"></div>
<div style="left:116px;top:457px;width:883px;height:16px;background:#ffffff;border-bottom:1px solid #e9e9e9;box-sizing:border-box"></div>
<div style="left:327px;top:457px;width:1px;height:16px;background:#e6e6e6"></div>
<div style="left:414.4px;top:457px;width:1px;height:16px;background:#e6e6e6"></div>
<div style="left:470px;top:457px;width:1px;height:16px;background:#e6e6e6"></div>
<div style="left:526.2px;top:457px;width:1px;height:16px;background:#e6e6e6"></div>
<div style="left:595px;top:457px;width:1px;height:16px;background:#e6e6e6"></div>
<div style="left:657.4px;top:457px;width:1px;height:16px;background:#e6e6e6"></div>
<div style="left:725px;top:457px;width:1px;height:16px;background:#e6e6e6"></div>
<div style="left:819.6px;top:457px;width:1px;height:16px;background:#e6e6e6"></div>
<div style="left:875.4px;top:457px;width:1px;height:16px;background:#e6e6e6"></div>
<div style="left:999px;top:357.7px;width:17px;height:115.3px;background:#e3e3e3"></div>
<div style="left:999px;top:357.7px;width:17px;height:15px;background:#eeeeee"></div>
<div style="left:999px;top:458.5px;width:17px;height:14.5px;background:#eeeeee"></div>
<svg class="abs" style="left:0;top:0" width="1024" height="500"><path d="M1003.3 367.6 L1007.5 363.4 L1011.7 367.6" stroke="#b0b0b0" stroke-width="1.3" fill="none"/></svg>
<svg class="abs" style="left:0;top:0" width="1024" height="500"><path d="M1003.3 463.4 L1007.5 467.6 L1011.7 463.4" stroke="#a8a8a8" stroke-width="1.3" fill="none"/></svg>
<div style="left:116px;top:473px;width:883px;height:16.5px;background:#dddddd"></div>
<div style="left:116px;top:473px;width:15px;height:16.5px;background:#ececec"></div>
<div style="left:984.5px;top:473px;width:14.5px;height:16.5px;background:#ececec"></div>
<svg class="abs" style="left:0;top:0" width="1024" height="500"><path d="M125.6 477.1 L121.4 481.3 L125.6 485.5" stroke="#9a9a9a" stroke-width="1.3" fill="none"/></svg>
<svg class="abs" style="left:0;top:0" width="1024" height="500"><path d="M989.4 477.1 L993.6 481.3 L989.4 485.5" stroke="#9a9a9a" stroke-width="1.3" fill="none"/></svg>
<div style="left:999px;top:473px;width:17px;height:16.5px;background:#e9e9e9"></div>
<svg class="abs" style="left:1002px;top:475px" width="12" height="12" viewBox="0 0 12 12"><path d="M1 7.2 L4 10 L10.5 1.8" stroke="#3a86c8" stroke-width="1.5" fill="none"/><path d="M4 10 L10.5 1.8" stroke="#4a9a50" stroke-width="0.8" fill="none" stroke-dasharray="1.2 1.2"/></svg>
<div style="left:0px;top:0px;width:1024px;height:1px;background:#c9c9c9"></div>
<div style="left:1023px;top:0px;width:1px;height:500px;background:#c9c9c9"></div>
<div style="left:0px;top:498.6px;width:1024px;height:1.4px;background:#c6c6c6"></div>
</div></body></html>
